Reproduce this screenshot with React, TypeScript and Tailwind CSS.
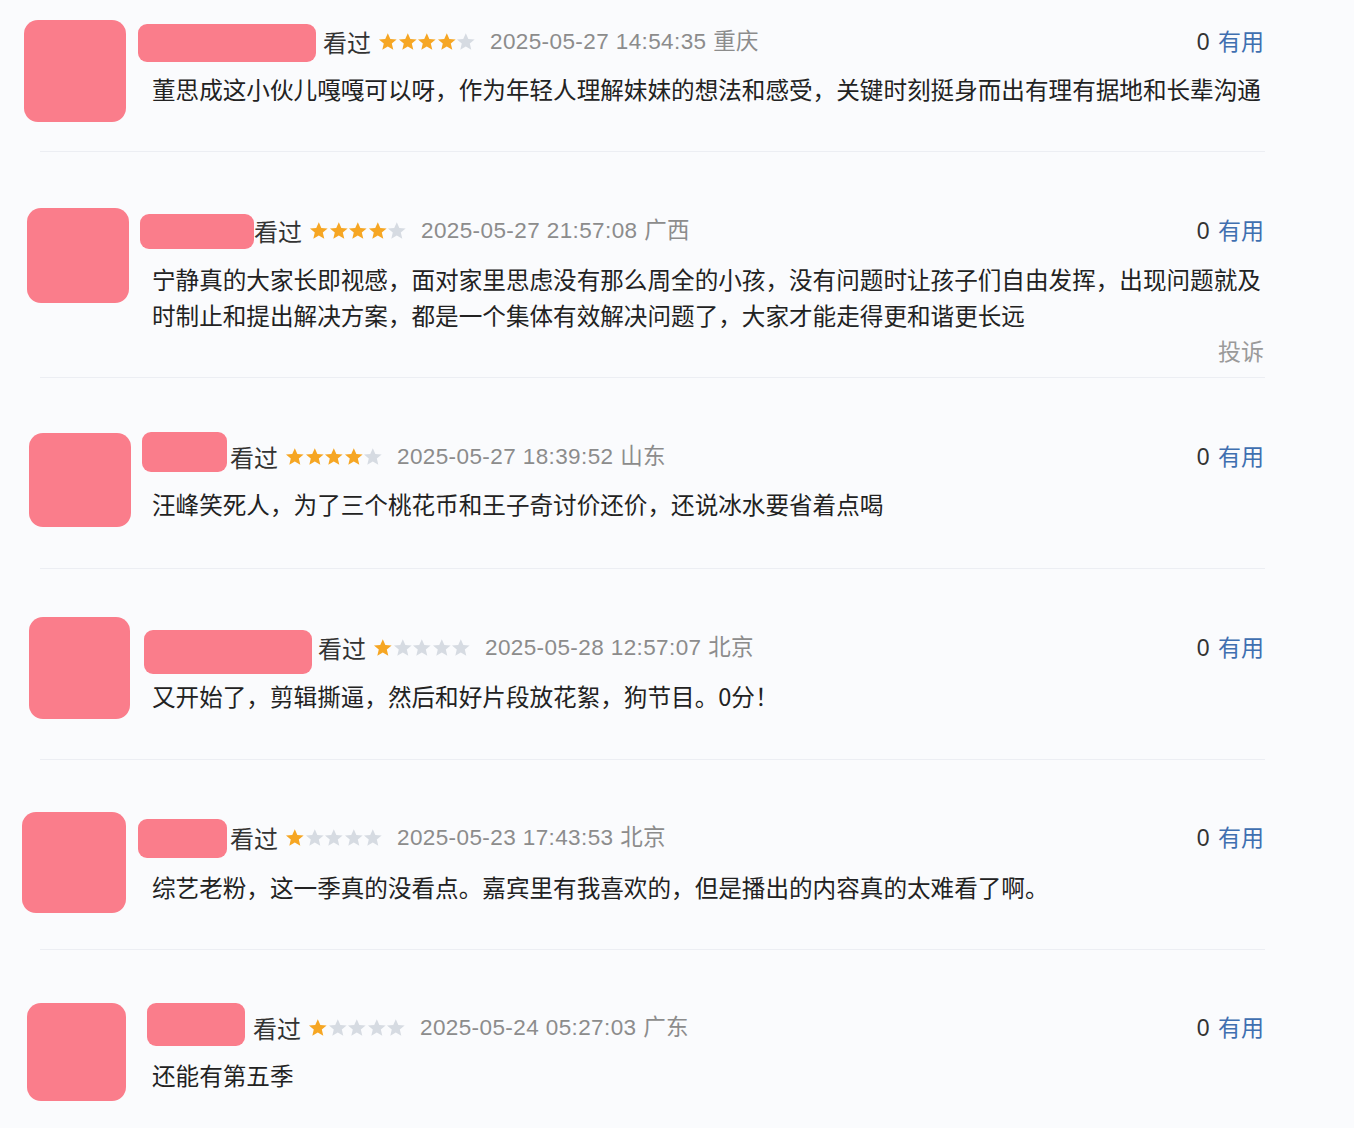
const CJK = "font-['Noto_Sans_CJK_SC',sans-serif]"

type Review = {
  row: string
  avatar: string
  body: string
  name: string
  nameShift: string
  nameGap: string
  textGap: string
  stars: number
  date: string
  lines: string[]
  report?: boolean
}

const reviews: Review[] = [
  {
    row: 'h-[151px]',
    avatar: 'ml-[24px] mt-[20px] w-[102px] h-[102px]',
    body: 'ml-[12px] mt-[22px]',
    name: 'w-[178px] h-[38px]',
    nameShift: 'translate-y-[1px]',
    nameGap: 'mr-[7px]',
    textGap: 'mt-[9px] pl-[14px]',
    stars: 4,
    date: '2025-05-27 14:54:35 重庆',
    lines: ['董思成这小伙儿嘎嘎可以呀，作为年轻人理解妹妹的想法和感受，关键时刻挺身而出有理有据地和长辈沟通'],
  },
  {
    row: 'h-[225px]',
    avatar: 'ml-[27px] mt-[56px] w-[102px] h-[95px]',
    body: 'ml-[11px] mt-[59px]',
    name: 'w-[114px] h-[35px]',
    nameShift: 'translate-y-[0px]',
    nameGap: 'mr-[0px]',
    textGap: 'mt-[10px] pl-[12px]',
    stars: 4,
    date: '2025-05-27 21:57:08 广西',
    lines: [
      '宁静真的大家长即视感，面对家里思虑没有那么周全的小孩，没有问题时让孩子们自由发挥，出现问题就及',
      '时制止和提出解决方案，都是一个集体有效解决问题了，大家才能走得更和谐更长远',
    ],
    report: true,
  },
  {
    row: 'h-[190px]',
    avatar: 'ml-[29px] mt-[55px] w-[102px] h-[94px]',
    body: 'ml-[11px] mt-[59px]',
    name: 'w-[85px] h-[40px]',
    nameShift: '-translate-y-[5px]',
    nameGap: 'mr-[3px]',
    textGap: 'mt-[9px] pl-[10px]',
    stars: 4,
    date: '2025-05-27 18:39:52 山东',
    lines: ['汪峰笑死人，为了三个桃花币和王子奇讨价还价，还说冰水要省着点喝'],
  },
  {
    row: 'h-[190px]',
    avatar: 'ml-[29px] mt-[48px] w-[101px] h-[102px]',
    body: 'ml-[14px] mt-[59px]',
    name: 'w-[168px] h-[44px]',
    nameShift: 'translate-y-[4px]',
    nameGap: 'mr-[6px]',
    textGap: 'mt-[10px] pl-[8px]',
    stars: 1,
    date: '2025-05-28 12:57:07 北京',
    lines: ['又开始了，剪辑撕逼，然后和好片段放花絮，狗节目。0分！'],
  },
  {
    row: 'h-[189px]',
    avatar: 'ml-[22px] mt-[52px] w-[104px] h-[101px]',
    body: 'ml-[12px] mt-[58px]',
    name: 'w-[89px] h-[39px]',
    nameShift: 'translate-y-[0px]',
    nameGap: 'mr-[3px]',
    textGap: 'mt-[11px] pl-[14px]',
    stars: 1,
    date: '2025-05-23 17:43:53 北京',
    lines: ['综艺老粉，这一季真的没看点。嘉宾里有我喜欢的，但是播出的内容真的太难看了啊。'],
  },
  {
    row: 'h-[178px]',
    avatar: 'ml-[27px] mt-[53px] w-[99px] h-[98px]',
    body: 'ml-[21px] mt-[58px]',
    name: 'w-[98px] h-[43px]',
    nameShift: '-translate-y-[4px]',
    nameGap: 'mr-[8px]',
    textGap: 'mt-[9px] pl-[5px]',
    stars: 1,
    date: '2025-05-24 05:27:03 广东',
    lines: ['还能有第五季'],
  },
]

function Star({ on }: { on: boolean }) {
  return (
    <svg viewBox="0 0 20 20" className="w-[19.6px] h-[19.6px]">
      <polygon
        points="10,1.2 12.6,7.1 19,7.6 14.1,11.8 15.6,18.2 10,14.8 4.4,18.2 5.9,11.8 1,7.6 7.4,7.1"
        fill={on ? '#f6a623' : '#d6dbe2'}
      />
    </svg>
  )
}

function Stars({ count }: { count: number }) {
  return (
    <div className="flex ml-[7px]">
      {[0, 1, 2, 3, 4].map((i) => (
        <Star key={i} on={i < count} />
      ))}
    </div>
  )
}

function ReviewRow({ r }: { r: Review }) {
  return (
    <div className={`flex items-start pr-[90px] ${r.row}`}>
      <div className={`shrink-0 rounded-[14px] bg-[#fa7d8b] ${r.avatar}`} />
      <div className={`flex-1 flex flex-col ${r.body}`}>
        {/* header: name, 看过, stars, date, useful */}
        <div className="flex items-center h-[40px]">
          <div className={`shrink-0 rounded-[9px] bg-[#fa7d8b] ${r.name} ${r.nameShift} ${r.nameGap}`} />
          <span className={`text-[24px] leading-none text-[#333] ${CJK}`}>看过</span>
          <Stars count={r.stars} />
          <span className="ml-[14px] text-[22.5px] leading-none tracking-[0.4px] text-[#8c8c8c] font-['Liberation_Sans','Noto_Sans_CJK_SC',sans-serif]">
            {r.date}
          </span>
          <span className="ml-auto text-[23px] leading-none text-[#333] font-['Liberation_Sans','Noto_Sans_CJK_SC',sans-serif]">
            0 <span className="ml-[2px] text-[#3f6fb0]">有用</span>
          </span>
        </div>
        <div className={`${r.textGap} text-[23.6px] leading-[36px] text-[#222] ${CJK}`}>
          {r.lines.map((l, i) => (
            <div key={i} className="whitespace-nowrap">{l}</div>
          ))}
        </div>
        {r.report && (
          <div className={`-mt-[1px] text-right text-[23px] leading-[36px] text-[#9a9a9a] ${CJK}`}>投诉</div>
        )}
      </div>
    </div>
  )
}

export default function App() {
  return (
    <div className="w-[1354px] h-[1128px] overflow-hidden bg-[#fafbfd]">
      {reviews.map((r, i) => (
        <div key={i}>
          <ReviewRow r={r} />
          {i < reviews.length - 1 && <div className="ml-[40px] mr-[89px] h-px bg-[#eceef3]" />}
        </div>
      ))}
    </div>
  )
}
